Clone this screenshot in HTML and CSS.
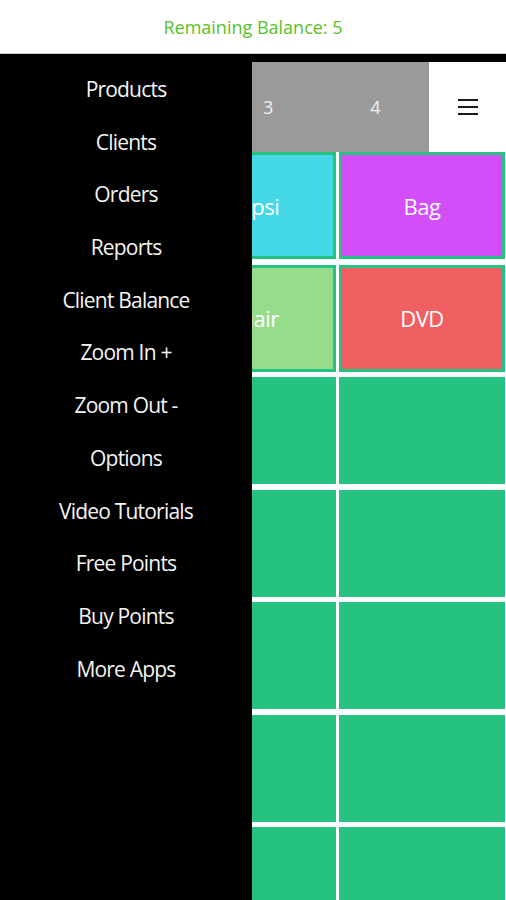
FILE: index.html
```html
<!DOCTYPE html>
<html lang="en">

<head>
  <meta charset="UTF-8">
  <meta name="viewport" content="width=device-width, initial-scale=1.0">
  <title>Orders</title>
  <link rel="stylesheet" href="styles.css">
</head>

<body>
  <header class="balance">
    Remaining Balance: 5
  </header>

  <div class="app">
    <!-- tabs bar, first two tabs sit under the drawer -->
    <div class="tabs">
      <div class="tab"></div>
      <div class="tab"></div>
      <div class="tab">3</div>
      <div class="tab">4</div>
      <div class="menu-btn">
        <span></span>
        <span></span>
        <span></span>
      </div>
    </div>

    <div class="grid">
      <div class="cell item orange"></div>
      <div class="cell item cyan">Pepsi</div>
      <div class="cell item purple">Bag</div>
      <div class="cell item yellow"></div>
      <div class="cell item lime">Chair</div>
      <div class="cell item red">DVD</div>
      <div class="cell"></div>
      <div class="cell"></div>
      <div class="cell"></div>
      <div class="cell"></div>
      <div class="cell"></div>
      <div class="cell"></div>
      <div class="cell"></div>
      <div class="cell"></div>
      <div class="cell"></div>
      <div class="cell"></div>
      <div class="cell"></div>
      <div class="cell"></div>
      <div class="cell"></div>
      <div class="cell"></div>
      <div class="cell"></div>
    </div>

    <nav class="drawer">
      <a>Products</a>
      <a>Clients</a>
      <a>Orders</a>
      <a>Reports</a>
      <a>Client Balance</a>
      <a>Zoom In +</a>
      <a>Zoom Out -</a>
      <a>Options</a>
      <a>Video Tutorials</a>
      <a>Free Points</a>
      <a>Buy Points</a>
      <a>More Apps</a>
    </nav>
  </div>
</body>

</html>
```

FILE: styles.css
```css
body {
  margin: 0;
  width: 506px;
  height: 900px;
  overflow: hidden;
  font-family: "Open Sans", "Noto Sans", sans-serif;
  background: #000;
}

.balance {
  height: 53px;
  line-height: 54px;
  background-color: #fff;
  border-bottom: 1px solid #c8c8c8;
  color: #55c22a;
  text-align: center;
  font-size: 18px;
  font-weight: 500;
}

.app {
  position: relative;
  height: 846px;
  padding-top: 8px;
  box-sizing: border-box;
  background: #000;
  overflow: hidden;
}

.tabs {
  display: flex;
  height: 90px;
  background-color: #9a9a9a;
}

.tab {
  flex: 1;
  display: flex;
  align-items: center;
  justify-content: center;
  color: #f2f2f2;
  font-size: 18px;
  font-weight: 500;
}

.menu-btn {
  width: 77px;
  background-color: #fff;
  display: flex;
  flex-direction: column;
  align-items: center;
  justify-content: center;
  gap: 4.5px;
}

.menu-btn span {
  display: block;
  width: 20px;
  height: 2.5px;
  background-color: #1a1a1a;
}

.grid {
  display: grid;
  grid-template-columns: repeat(3, 1fr);
  grid-auto-rows: 107px;
  gap: 5.5px 3px;
  padding: 0 1px;
  background-color: #fff;
}

.cell {
  background-color: #26c281;
  display: flex;
  align-items: center;
  justify-content: center;
  color: #fff;
  font-size: 22px;
  font-weight: 500;
  letter-spacing: -0.5px;
}

.item {
  border: 3px solid #26c281;
}

.cyan { background-color: #44d8e6; }
.purple { background-color: #d14ef8; }
.lime { background-color: #97dc8a; }
.red { background-color: #f05f62; }
.orange { background-color: #f5a623; }
.yellow { background-color: #f3d34a; }

.drawer {
  position: absolute;
  top: 0;
  left: 0;
  bottom: 0;
  width: 252px;
  padding-top: 9px;
  background-color: #000;
  display: flex;
  flex-direction: column;
}

.drawer a {
  height: 52.7px;
  line-height: 52.7px;
  text-align: center;
  color: #f4f4f4;
  font-size: 21px;
  font-weight: 500;
  letter-spacing: -0.8px;
}
```
